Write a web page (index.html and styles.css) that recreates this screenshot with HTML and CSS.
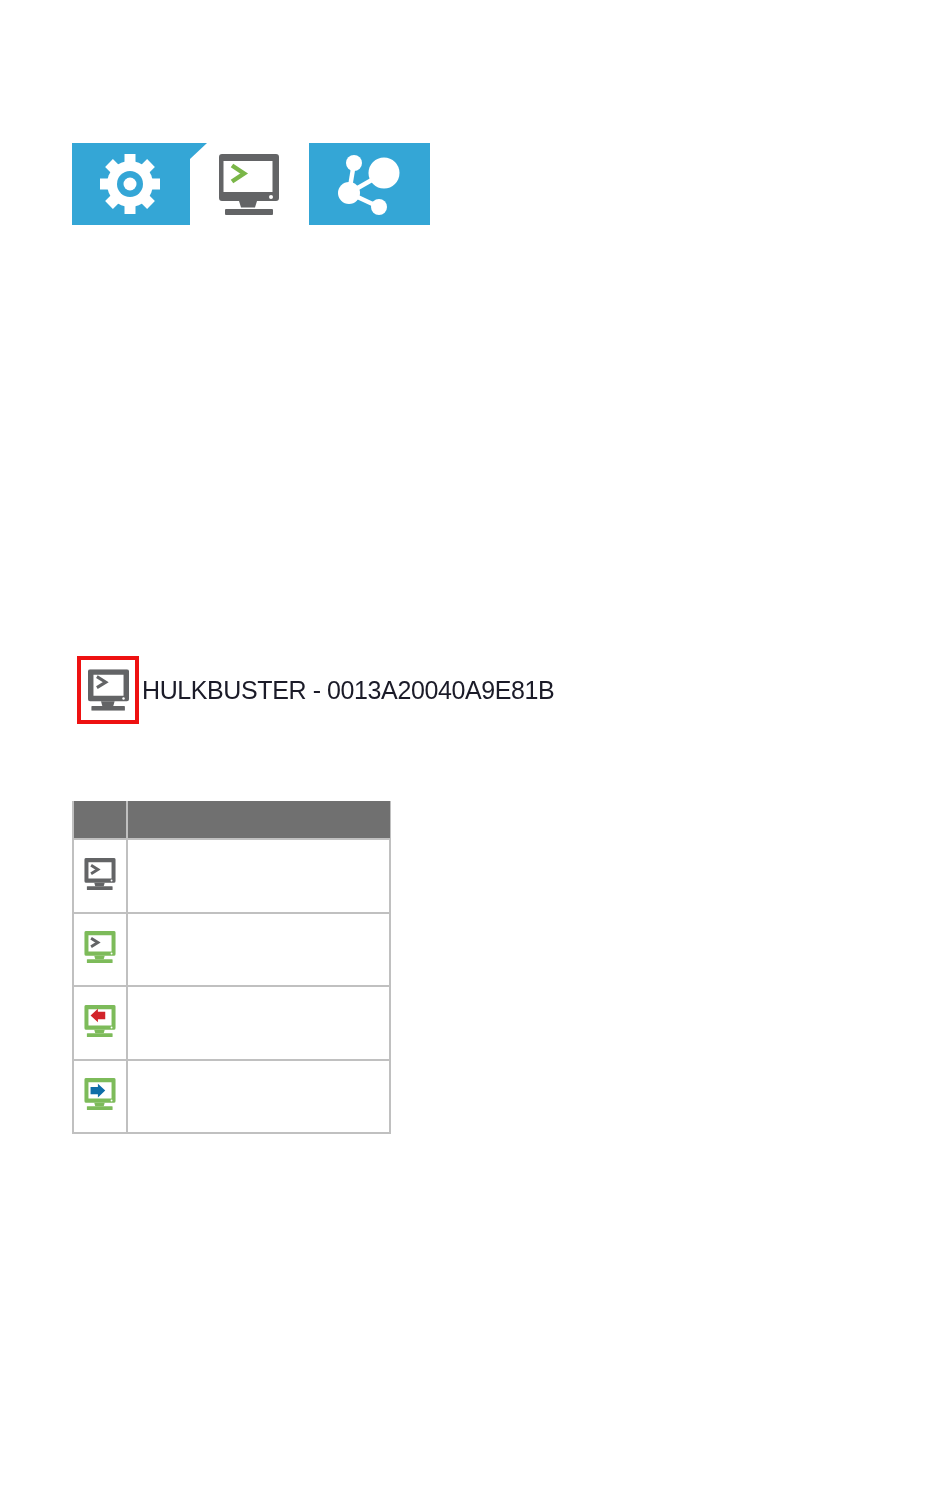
FILE: index.html
```html
<!DOCTYPE html>
<html lang="en">
<head>
    <meta charset="UTF-8">
    <title>HULKBUSTER</title>
    <link rel="stylesheet" href="styles.css">
</head>
<body>
    <!-- Monitor bodies shared by every icon, the colour comes from the parent -->
    <svg class="defs" width="0" height="0">
        <symbol id="monitor" viewBox="0 0 60 61">
            <path fill="currentColor" fill-rule="evenodd" d="M3 0H57a3 3 0 0 1 3 3V44a3 3 0 0 1-3 3H3a3 3 0 0 1-3-3V3a3 3 0 0 1 3-3ZM4.500 7V38H53.500V7Z"/>
            <circle cx="52" cy="43" r="2" fill="#fff"/>
            <path fill="currentColor" d="M20 47H38L36 53.500H22Z"/>
            <rect x="6" y="55" width="48" height="6" rx="1" fill="currentColor"/>
        </symbol>
        <!-- Heavier frame for the smaller sizes -->
        <symbol id="monitor-bold" viewBox="0 0 60 61">
            <path fill="currentColor" fill-rule="evenodd" d="M3 0H57a3 3 0 0 1 3 3V44a3 3 0 0 1-3 3H3a3 3 0 0 1-3-3V3a3 3 0 0 1 3-3ZM8 8V39H52V8Z"/>
            <circle cx="52" cy="43" r="1.800" fill="#fff"/>
            <path fill="currentColor" d="M19 47H39L37 54H21Z"/>
            <rect x="5" y="54" width="49" height="7" rx="1" fill="currentColor"/>
        </symbol>
    </svg>

    <div class="tabs">
        <div class="tab tab-settings">
            <svg class="gear" width="62" height="62" viewBox="-31 -31 62 62">
                <g stroke="#fff" stroke-width="11" stroke-linejoin="round">
                    <line x1="-30" y1="0" x2="30" y2="0"/>
                    <line x1="0" y1="-30" x2="0" y2="30"/>
                    <line x1="-21" y1="-21" x2="21" y2="21"/>
                    <line x1="-21" y1="21" x2="21" y2="-21"/>
                </g>
                <circle r="23" fill="#fff"/>
                <circle r="13" fill="#34a6d6"/>
                <circle r="6.500" fill="#fff"/>
            </svg>
        </div>
        <div class="tab tab-console">
            <svg class="monitor-lg" viewBox="0 0 60 61">
                <use href="#monitor"/>
                <path class="prompt" d="M13 11.500L25 19.500L13 27.500"/>
            </svg>
        </div>
        <div class="tab tab-network">
            <svg class="share" width="66" height="68" viewBox="337 150 66 68">
                <g stroke="#fff" stroke-width="4.500">
                    <line x1="349" y1="193" x2="354" y2="163"/>
                    <line x1="349" y1="193" x2="384" y2="173"/>
                    <line x1="349" y1="193" x2="379" y2="207"/>
                </g>
                <g fill="#fff">
                    <circle cx="354" cy="163" r="8"/>
                    <circle cx="384" cy="173" r="15.500"/>
                    <circle cx="349" cy="193" r="11"/>
                    <circle cx="379" cy="207" r="8"/>
                </g>
            </svg>
        </div>
    </div>

    <div class="device">
        <div class="device-icon">
            <svg class="monitor-md" viewBox="0 0 60 61">
                <use href="#monitor-bold"/>
                <path class="prompt prompt-grey" d="M13 11L26 19L13 27"/>
            </svg>
        </div>
        <span class="device-name">HULKBUSTER - 0013A20040A9E81B</span>
    </div>

    <table class="states">
        <tr><th class="col-icon"></th><th></th></tr>
        <tr>
            <td class="col-icon">
                <svg class="monitor-sm" viewBox="0 0 60 61">
                    <use href="#monitor-bold"/>
                    <path class="prompt prompt-grey prompt-sm" d="M13 14L26 22L13 30"/>
                </svg>
            </td>
            <td></td>
        </tr>
        <tr>
            <td class="col-icon">
                <svg class="monitor-sm green" viewBox="0 0 60 61">
                    <use href="#monitor-bold"/>
                    <path class="prompt prompt-grey prompt-sm" d="M13 14L26 22L13 30"/>
                </svg>
            </td>
            <td></td>
        </tr>
        <tr>
            <td class="col-icon">
                <svg class="monitor-sm green" viewBox="0 0 60 61">
                    <use href="#monitor-bold"/>
                    <path fill="#d2232a" d="M12 20L26 7V13H40V27H26V33Z"/>
                </svg>
            </td>
            <td></td>
        </tr>
        <tr>
            <td class="col-icon">
                <svg class="monitor-sm green" viewBox="0 0 60 61">
                    <use href="#monitor-bold"/>
                    <path fill="#0f6ea8" d="M40 24L26 11V17H12V31H26V37Z"/>
                </svg>
            </td>
            <td></td>
        </tr>
    </table>
</body>
</html>
```

FILE: styles.css
```css
body {
    margin: 0;
    background-color: #fff;
    font-family: "Liberation Sans", Arial, sans-serif;
}
.defs {
    display: block;
    height: 0;
}

/* Tab strip */
.tabs {
    display: flex;
    height: 82px;
    margin: 143px 0 0 72px;
}
.tab {
    display: flex;
    align-items: center;
    filter: blur(0.5px);
}
.tab-settings {
    width: 135px;
    padding-left: 27px;
    box-sizing: border-box;
    background-color: #34a6d6;
    clip-path: polygon(0 0, 100% 0, 118px 16px, 118px 100%, 0 100%);
}
.tab-console {
    width: 102px;
    padding-left: 12px;
    box-sizing: border-box;
    color: #636466;
}
.tab-network {
    width: 121px;
    padding-left: 28px;
    box-sizing: border-box;
    background-color: #34a6d6;
}
.monitor-lg {
    width: 60px;
    height: 61px;
}
.prompt {
    fill: none;
    stroke: #7ab648;
    stroke-width: 4.500;
}
.prompt-grey {
    stroke: #636466;
}
.prompt-sm {
    stroke-width: 5.500;
}

/* Device row */
.device {
    display: flex;
    align-items: center;
    gap: 3px;
    margin: 431px 0 0 77px;
}
.device-icon {
    display: flex;
    align-items: center;
    justify-content: center;
    box-sizing: border-box;
    width: 62px;
    height: 68px;
    border: 4px solid #ee1111;
    color: #636466;
}
.monitor-md {
    width: 41px;
    height: 42px;
    filter: blur(0.5px);
}
.device-name {
    font-size: 25px;
    letter-spacing: -0.4px;
    color: #1b1b28;
    filter: blur(0.4px);
}

/* Status table */
.states {
    width: 319px;
    margin: 77px 0 0 72px;
    border-collapse: collapse;
    table-layout: fixed;
}
.states th {
    height: 37px;
    padding: 0;
    background-color: #707070;
    border-left: 2px solid #c0c0c0;
    border-right: 1px solid #c0c0c0;
}
.states td {
    height: 71.5px;
    padding: 0;
    border: 2px solid #c0c0c0;
    text-align: center;
}
.col-icon {
    width: 52px;
    color: #636466;
}
.monitor-sm {
    display: block;
    width: 32px;
    height: 32px;
    margin: 0 auto 4px;
    filter: blur(0.4px);
}
.green {
    color: #7dbb5a;
}
```
